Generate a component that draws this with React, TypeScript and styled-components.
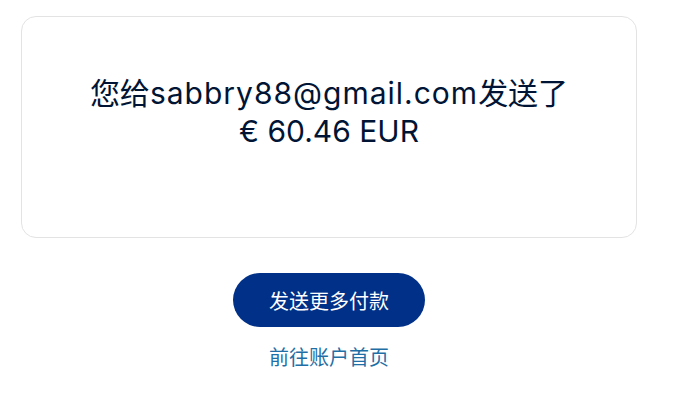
import React from "react";
import styled, { createGlobalStyle } from "styled-components";

const GlobalStyle = createGlobalStyle`
  html, body {
    margin: 0;
    padding: 0;
    background: #ffffff;
  }
  body {
    font-family: Inter, "Noto Sans CJK SC", sans-serif;
  }
`;

const Page = styled.main`
  display: flex;
  flex-direction: column;
  align-items: center;
  width: 616px;
  padding: 16px 0 0 21px;
`;

const Card = styled.section`
  box-sizing: border-box;
  width: 616px;
  height: 222px;
  padding: 57px 0 0;
  border: 1px solid #e3e3e3;
  border-radius: 15px;
  text-align: center;
`;

const Message = styled.h2`
  margin: 0;
  font-family: Inter, "Noto Sans CJK SC", sans-serif;
  font-size: 30px;
  font-weight: 400;
  line-height: 38px;
  color: #001435;
`;

const Recipient = styled.span`
  letter-spacing: 1px;
`;

const Actions = styled.div`
  display: flex;
  flex-direction: column;
  align-items: center;
  gap: 18px;
  margin-top: 35px;
`;

const PrimaryButton = styled.button`
  width: 192px;
  height: 54px;
  border: none;
  border-radius: 27px;
  background: #003087;
  color: #ffffff;
  font-family: "Noto Sans CJK SC", sans-serif;
  font-size: 20px;
  cursor: pointer;
`;

const HomeLink = styled.a`
  font-family: "Noto Sans CJK SC", sans-serif;
  font-size: 20px;
  line-height: 24px;
  color: #1f6fa6;
  text-decoration: none;
`;

export default function App() {
  return (
    <>
      <GlobalStyle />
      <Page>
        <Card>
          <Message>
            您给<Recipient>sabbry88@gmail.com</Recipient>发送了
            <br />€ 60.46 EUR
          </Message>
        </Card>
        <Actions>
          <PrimaryButton>发送更多付款</PrimaryButton>
          <HomeLink href="#">前往账户首页</HomeLink>
        </Actions>
      </Page>
    </>
  );
}
